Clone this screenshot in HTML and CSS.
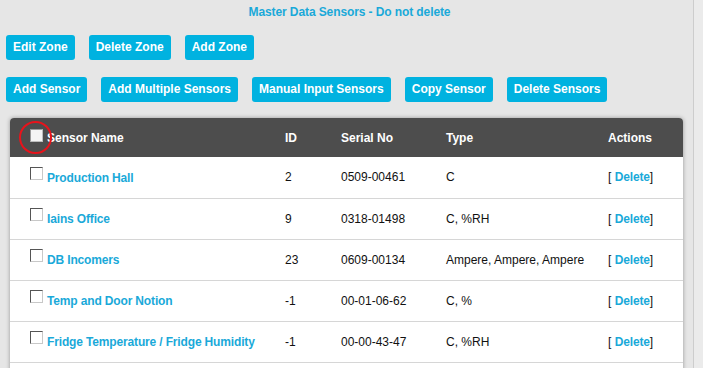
FILE: index.html
```html
<!DOCTYPE html>
<html lang="en">
<head>
    <meta charset="UTF-8">
    <title>Master Data Sensors</title>
    <link rel="stylesheet" href="styles.css">
</head>
<body>
    <div class="page">
        <h2 class="zone-title">Master Data Sensors - Do not delete</h2>
        <div class="btn-row">
            <a href="#" class="btn">Edit Zone</a>
            <a href="#" class="btn">Delete Zone</a>
            <a href="#" class="btn">Add Zone</a>
        </div>
        <div class="btn-row">
            <a href="#" class="btn">Add Sensor</a>
            <a href="#" class="btn">Add Multiple Sensors</a>
            <a href="#" class="btn">Manual Input Sensors</a>
            <a href="#" class="btn">Copy Sensor</a>
            <a href="#" class="btn">Delete Sensors</a>
        </div>
        <div class="table-wrap">
            <span class="highlight-ring"></span>
            <table class="sensors">
                <thead>
                    <tr>
                        <th class="col-name"><span class="chk chk-head"></span>Sensor Name</th>
                        <th class="col-id">ID</th>
                        <th class="col-serial">Serial No</th>
                        <th class="col-type">Type</th>
                        <th class="col-actions">Actions</th>
                    </tr>
                </thead>
                <tbody>
                    <tr>
                        <td><span class="chk"></span><a href="#" class="name">Production Hall</a></td>
                        <td>2</td>
                        <td>0509-00461</td>
                        <td>C</td>
                        <td>[ <a href="#" class="del">Delete</a>]</td>
                    </tr>
                    <tr>
                        <td><span class="chk"></span><a href="#" class="name">Iains Office</a></td>
                        <td>9</td>
                        <td>0318-01498</td>
                        <td>C, %RH</td>
                        <td>[ <a href="#" class="del">Delete</a>]</td>
                    </tr>
                    <tr>
                        <td><span class="chk"></span><a href="#" class="name">DB Incomers</a></td>
                        <td>23</td>
                        <td>0609-00134</td>
                        <td>Ampere, Ampere, Ampere</td>
                        <td>[ <a href="#" class="del">Delete</a>]</td>
                    </tr>
                    <tr>
                        <td><span class="chk"></span><a href="#" class="name">Temp and Door Notion</a></td>
                        <td>-1</td>
                        <td>00-01-06-62</td>
                        <td>C, %</td>
                        <td>[ <a href="#" class="del">Delete</a>]</td>
                    </tr>
                    <tr>
                        <td><span class="chk"></span><a href="#" class="name">Fridge Temperature / Fridge Humidity</a></td>
                        <td>-1</td>
                        <td>00-00-43-47</td>
                        <td>C, %RH</td>
                        <td>[ <a href="#" class="del">Delete</a>]</td>
                    </tr>
                </tbody>
            </table>
            <div class="table-more"></div>
        </div>
    </div>
</body>
</html>
```

FILE: styles.css
```css
* { margin: 0; padding: 0; box-sizing: border-box; }
html, body { height: 100%; overflow: hidden; }
body {
    font-family: "Liberation Sans", Arial, sans-serif;
    font-size: 12px;
    color: #111;
    background: #ebebeb;
}
.page {
    width: 694px;
    min-height: 100%;
    background: #e6e6e6;
    border-right: 1px solid #cdcdcd;
    padding: 5px 0 0 6px;
}
.zone-title {
    font-size: 12px;
    font-weight: bold;
    color: #1aa9d9;
    text-align: center;
    line-height: 14px;
    letter-spacing: -0.1px;
    margin-bottom: 16px;
}
.btn-row {
    display: flex;
    gap: 14px;
    margin-bottom: 17px;
}
.btn {
    display: inline-block;
    height: 25px;
    line-height: 25px;
    padding: 0 7px;
    background: #00b2e0;
    color: #fff;
    font-weight: bold;
    text-decoration: none;
    border-radius: 3px;
}
.table-wrap {
    position: relative;
    width: 673px;
    margin: -1px 0 0 4px;
    background: #fff;
    border-radius: 4px 4px 0 0;
    box-shadow: 0 0 4px rgba(0, 0, 0, 0.35);
}
.sensors {
    width: 100%;
    border-collapse: collapse;
    table-layout: fixed;
}
.sensors th {
    background: #4d4d4d;
    color: #fff;
    font-weight: bold;
    text-align: left;
    height: 39px;
    padding: 0;
}
.sensors th:first-child { border-top-left-radius: 4px; }
.sensors th:last-child { border-top-right-radius: 4px; }
.sensors td {
    height: 41px;
    padding: 0;
    border-bottom: 1px solid #d6d6d6;
}
.sensors th:first-child,
.sensors td:first-child { padding-left: 20px; }
.col-name { width: 275px; }
.col-id { width: 56px; }
.col-serial { width: 105px; }
.col-type { width: 162px; }
.col-actions { width: 75px; }
.table-more { height: 20px; }
.chk {
    display: inline-block;
    width: 13px;
    height: 13px;
    margin-right: 4px;
    vertical-align: -1px;
    background: #fff;
    border-top: 1px solid #555;
    border-left: 1px solid #555;
    border-right: 1px solid #c8c8c8;
    border-bottom: 1px solid #c8c8c8;
    position: relative;
    top: -3px;
}
.chk-head {
    border-color: #9a9a9a #bdbdbd #bdbdbd #9a9a9a;
    background: #f4f4f4;
    top: -1px;
}
.name, .del {
    color: #1aa9d9;
    font-weight: bold;
    text-decoration: none;
    letter-spacing: -0.15px;
}
.highlight-ring {
    position: absolute;
    left: 9px;
    top: 3px;
    width: 33px;
    height: 33px;
    border: 2.5px solid #e8131b;
    border-radius: 50%;
    z-index: 2;
}
```
